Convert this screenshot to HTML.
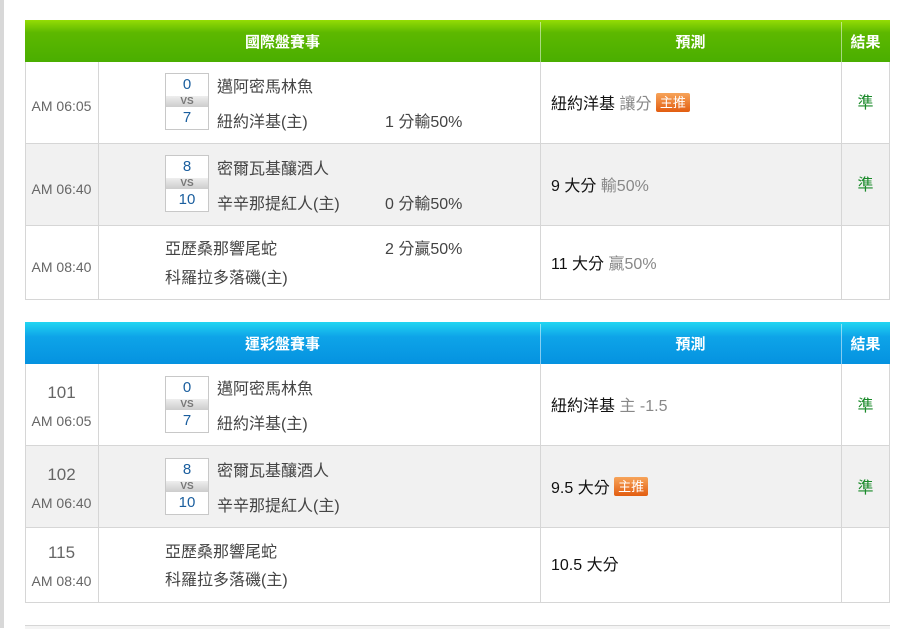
<!DOCTYPE html>
<html><head><meta charset="utf-8"><style>
body{margin:0;width:912px;height:628px;background:#fff;position:relative;overflow:hidden;font-family:"Liberation Sans","Noto Sans CJK TC",sans-serif;font-size:15px;color:#555}
.lb{position:absolute;left:0;top:0;width:4px;height:628px;background:#d8d8d8}
.a{position:absolute}
.hd{position:absolute;left:25px;width:865px;height:42px;color:#fff;font-weight:bold;font-size:15px}
.hd div{position:absolute;top:2px;height:42px;line-height:42px;text-align:center;border-right:1px solid rgba(255,255,255,.5)}
.hd div.bg{top:0}
.g{background:linear-gradient(#95dc05,#5db800 30%,#4aae00)}
.b{background:linear-gradient(#22d6f2,#0ea4e8 35%,#0592e0)}
.row{position:absolute;left:25px;width:865px;border-bottom:1px solid #d6d6d6;box-sizing:border-box}
.vl{position:absolute;width:1px;background:#d6d6d6}
.box{position:absolute;left:165px;width:44px;border:1px solid #c8c8c8;box-sizing:border-box;background:#fff;color:#1a5e9e;text-align:center;font-size:15px}
.box .s{height:22px;line-height:22px}
.box .vs{height:11px;line-height:11px;font-size:10px;font-weight:bold;color:#777;background:linear-gradient(#eee,#ccc)}
.tm{position:absolute;left:25px;width:73px;text-align:center;color:#666;font-size:14px}
.nm{position:absolute;color:#444;font-size:16px}
.pr{position:absolute;left:551px;color:#111;font-size:16px}
.pr span.gr{color:#888}
.ok{position:absolute;left:841px;width:49px;text-align:center;color:#1a8a2a;font-size:16px}
.tag{display:inline-block;background:linear-gradient(#f7a45a,#e25d10);color:#fff;font-size:13px;padding:1px 4px;border-radius:2px;line-height:17px;vertical-align:2px}
</style></head><body>
<div class="lb"></div>

<div class="hd g" style="top:20px"><div style="left:0;width:515px">國際盤賽事</div><div style="left:515px;width:301px">預測</div><div style="left:816px;width:49px;border:none">結果</div></div>
<div class="row" style="top:62px;height:82px;background:#fff"></div>
<div class="row" style="top:144px;height:82px;background:#f1f1f1"></div>
<div class="row" style="top:226px;height:74px;background:#fff"></div>
<div class="vl" style="left:25px;top:62px;height:238px"></div>
<div class="vl" style="left:98px;top:62px;height:238px"></div>
<div class="vl" style="left:540px;top:62px;height:238px"></div>
<div class="vl" style="left:841px;top:62px;height:238px"></div>
<div class="vl" style="left:889px;top:62px;height:238px"></div>

<div class="tm" style="top:98px">AM 06:05</div>
<div class="box" style="top:73px"><div class="s">0</div><div class="vs">VS</div><div class="s">7</div></div>
<div class="nm" style="left:217px;top:73px">邁阿密馬林魚</div>
<div class="nm" style="left:217px;top:108px">紐約洋基(主)</div>
<div class="nm" style="left:385px;top:108px">1 分輸50%</div>
<div class="pr" style="top:90px">紐約洋基 <span class="gr">讓分</span> <span class="tag">主推</span></div>
<div class="ok" style="top:89px">準</div>

<div class="tm" style="top:181px">AM 06:40</div>
<div class="box" style="top:155px"><div class="s">8</div><div class="vs">VS</div><div class="s">10</div></div>
<div class="nm" style="left:217px;top:155px">密爾瓦基釀酒人</div>
<div class="nm" style="left:217px;top:190px">辛辛那提紅人(主)</div>
<div class="nm" style="left:385px;top:190px">0 分輸50%</div>
<div class="pr" style="top:172px">9 大分 <span class="gr">輸50%</span></div>
<div class="ok" style="top:171px">準</div>

<div class="tm" style="top:259px">AM 08:40</div>
<div class="nm" style="left:165px;top:235px">亞歷桑那響尾蛇</div>
<div class="nm" style="left:165px;top:264px">科羅拉多落磯(主)</div>
<div class="nm" style="left:385px;top:235px">2 分贏50%</div>
<div class="pr" style="top:250px">11 大分 <span class="gr">贏50%</span></div>

<div class="hd b" style="top:322px"><div style="left:0;width:515px">運彩盤賽事</div><div style="left:515px;width:301px">預測</div><div style="left:816px;width:49px;border:none">結果</div></div>
<div class="row" style="top:364px;height:82px;background:#fff"></div>
<div class="row" style="top:446px;height:82px;background:#f1f1f1"></div>
<div class="row" style="top:528px;height:75px;background:#fff"></div>
<div class="vl" style="left:25px;top:364px;height:239px"></div>
<div class="vl" style="left:98px;top:364px;height:239px"></div>
<div class="vl" style="left:540px;top:364px;height:239px"></div>
<div class="vl" style="left:841px;top:364px;height:239px"></div>
<div class="vl" style="left:889px;top:364px;height:239px"></div>

<div class="tm" style="top:383px;font-size:17px">101</div>
<div class="tm" style="top:413px">AM 06:05</div>
<div class="box" style="top:376px"><div class="s">0</div><div class="vs">VS</div><div class="s">7</div></div>
<div class="nm" style="left:217px;top:375px">邁阿密馬林魚</div>
<div class="nm" style="left:217px;top:410px">紐約洋基(主)</div>
<div class="pr" style="top:392px">紐約洋基 <span class="gr">主 -1.5</span></div>
<div class="ok" style="top:392px">準</div>

<div class="tm" style="top:465px;font-size:17px">102</div>
<div class="tm" style="top:495px">AM 06:40</div>
<div class="box" style="top:458px"><div class="s">8</div><div class="vs">VS</div><div class="s">10</div></div>
<div class="nm" style="left:217px;top:457px">密爾瓦基釀酒人</div>
<div class="nm" style="left:217px;top:492px">辛辛那提紅人(主)</div>
<div class="pr" style="top:474px">9.5 大分 <span class="tag">主推</span></div>
<div class="ok" style="top:474px">準</div>

<div class="tm" style="top:543px;font-size:17px">115</div>
<div class="tm" style="top:573px">AM 08:40</div>
<div class="nm" style="left:165px;top:538px">亞歷桑那響尾蛇</div>
<div class="nm" style="left:165px;top:566px">科羅拉多落磯(主)</div>
<div class="pr" style="top:551px">10.5 大分</div>

<div class="a" style="left:25px;top:625px;width:865px;height:3px;border-top:1px solid #d6d6d6;background:#f4f4f4"></div>
</body></html>
